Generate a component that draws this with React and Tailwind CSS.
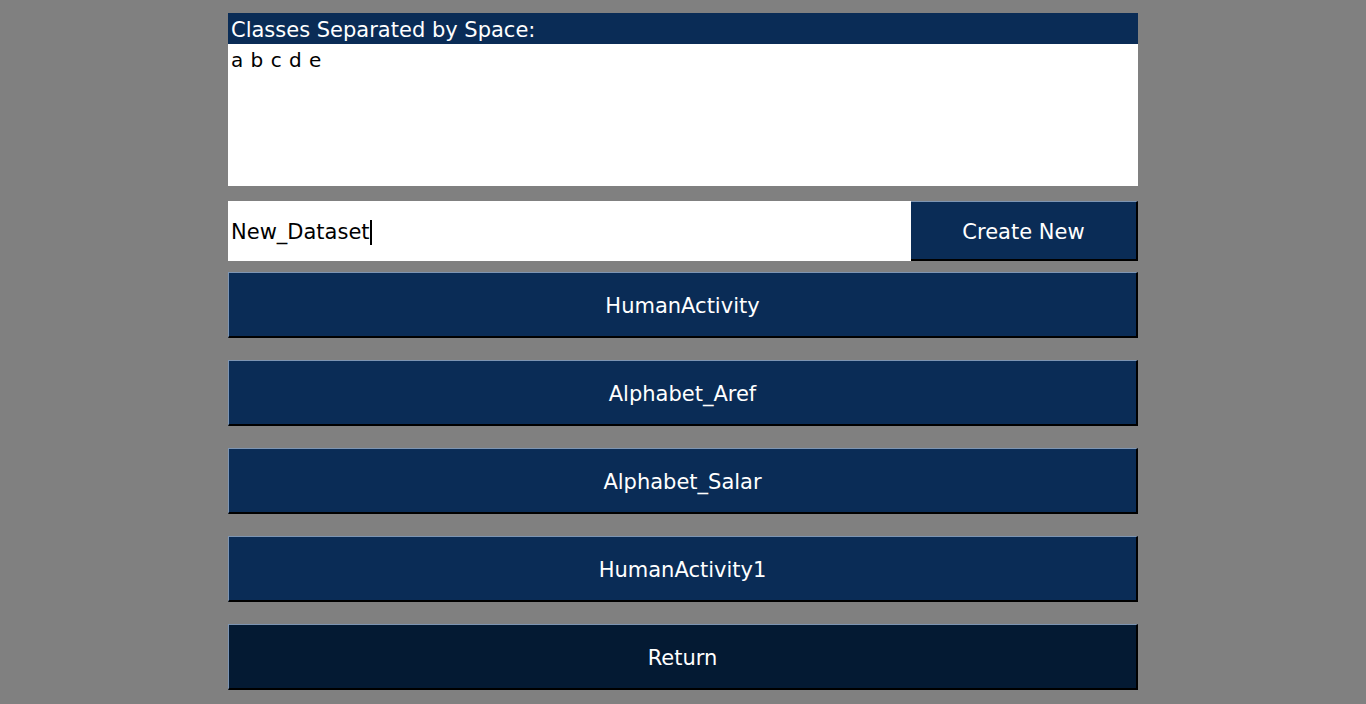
import React from 'react';

const datasets = ['HumanActivity', 'Alphabet_Aref', 'Alphabet_Salar', 'HumanActivity1'];

function NavButton({ label, dark }) {
  return (
    <button
      className={`h-[66px] w-full pt-[5px] border-t border-l border-t-[#7d95b3] border-l-[#7d95b3] border-r-2 border-b-2 border-r-black border-b-black text-white text-[21px] ${
        dark ? 'bg-[#041a33]' : 'bg-[#0a2c56]'
      }`}
    >
      {label}
    </button>
  );
}

export default function App() {
  return (
    <div
      className="min-h-[704px] w-full bg-[#808080] flex justify-center"
      style={{ fontFamily: '"DejaVu Sans", Verdana, sans-serif' }}
    >
      <div className="w-[910px] pt-[13px] flex flex-col">
        {/* classes box */}
        <div className="bg-[#0a2c56] text-white text-[21px] h-[31px] leading-[35px] px-[3px]">
          Classes Separated by Space:
        </div>
        <div className="bg-white h-[142px] px-[3px] pt-[3px] text-[20px] tracking-[0.5px] text-black leading-[26px]">
          a b c d e
        </div>

        {/* new dataset row */}
        <div className="flex mt-[15px] h-[60px]">
          <div className="flex-1 bg-white flex items-center px-[3px] pt-[3px] text-[21px] text-black">
            New_Dataset<span className="inline-block w-[2px] h-[25px] bg-black"></span>
          </div>
          <button className="w-[227px] pt-[4px] bg-[#0a2c56] text-white text-[21px] border-t border-t-[#7d95b3] border-r-2 border-b-2 border-r-black border-b-black">
            Create New
          </button>
        </div>

        {/* dataset list */}
        <div className="flex flex-col gap-[22px] mt-[11px]">
          {datasets.map((d) => (
            <NavButton key={d} label={d} />
          ))}
          <NavButton label="Return" dark />
        </div>
      </div>
    </div>
  );
}
